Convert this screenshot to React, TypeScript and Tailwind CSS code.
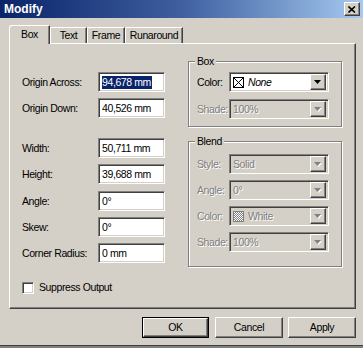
import React from "react";

const raised =
  "border-t border-l border-t-white border-l-white border-r border-b border-r-[#404040] border-b-[#404040] shadow-[inset_-1px_-1px_0_#808080]";
const sunken =
  "border-t border-l border-t-[#808080] border-l-[#808080] border-r border-b border-r-white border-b-white shadow-[inset_1px_1px_0_#404040,inset_-1px_-1px_0_#d4d0c8]";

function Field({ label, value, selected, mt }: { label: string; value: string; selected?: boolean; mt: string }) {
  return (
    <div className={`flex items-center h-[20px] ${mt}`}>
      <div className="w-[76px] text-black">{label}</div>
      <div className={`w-[67px] h-[20px] bg-white flex items-center pl-[3px] ${sunken}`}>
        <span className={selected ? "bg-[#0a246a] text-white pr-[1px] leading-[13px]" : "text-black"}>{value}</span>
      </div>
    </div>
  );
}

function Arrow({ disabled }: { disabled?: boolean }) {
  return (
    <div className={`w-[16px] h-[16px] bg-[#d4d0c8] flex items-center justify-center ${raised}`}>
      <svg width="8" height="5" viewBox="0 0 8 5">
        {disabled && <polygon points="1,1 8,1 4.5,5" fill="#ffffff" />}
        <polygon points="0,0 7,0 3.5,4" fill={disabled ? "#808080" : "#000000"} />
      </svg>
    </div>
  );
}

function Combo({
  label,
  disabled,
  children,
  mt,
}: {
  label: string;
  disabled?: boolean;
  children: React.ReactNode;
  mt: string;
}) {
  return (
    <div className={`flex items-center h-[20px] ${mt}`}>
      <div
        className={`w-[32px] whitespace-nowrap ${disabled ? "text-[#808080] [text-shadow:1px_1px_0_#fff]" : "text-black"}`}
      >
        {label}
      </div>
      <div
        className={`w-[100px] h-[20px] flex items-center justify-between pr-[2px] ${
          disabled ? "bg-[#d4d0c8]" : "bg-white"
        } ${sunken}`}
      >
        <div
          className={`flex items-center gap-[4px] pl-[3px] ${
            disabled ? "text-[#808080] [text-shadow:1px_1px_0_#fff]" : "text-black"
          }`}
        >
          {children}
        </div>
        <Arrow disabled={disabled} />
      </div>
    </div>
  );
}

function Group({ title, h, mt, children }: { title: string; h: string; mt: string; children: React.ReactNode }) {
  return (
    <div
      className={`relative w-[154px] ${h} ${mt} border border-[#808080] shadow-[inset_1px_1px_0_#fff,1px_1px_0_#fff] pl-[8px]`}
    >
      <div className="absolute left-[6px] top-[-8px] bg-[#d4d0c8] px-[2px] text-black leading-[14px]">{title}</div>
      {children}
    </div>
  );
}

function Tab({ label, active, w }: { label: string; active?: boolean; w: string }) {
  return (
    <div
      className={`${w} ${
        active ? "h-[19px] bg-[#d4d0c8] rounded-tl-[3px] pb-[2px]" : "h-[16px] mb-[1px] rounded-tl-[2px]"
      } border-l border-t border-l-white border-t-white border-r border-r-[#404040] shadow-[inset_-1px_0_0_#808080] flex items-center justify-center text-black`}
    >
      {label}
    </div>
  );
}

function Button({ label, def, w }: { label: string; def?: boolean; w: string }) {
  const inner = (
    <div className={`w-full h-full flex items-center justify-center ${raised}`}>{label}</div>
  );
  return def ? (
    <div className={`${w} h-[21px] border border-black`}>{inner}</div>
  ) : (
    <div className={`${w} h-[21px]`}>{inner}</div>
  );
}

export default function App() {
  return (
    <div
      className="w-[363px] h-[348px] bg-[#d4d0c8] flex flex-col text-[10.5px] tracking-[-0.4px] leading-none overflow-hidden"
      style={{ fontFamily: '"Liberation Sans", Arial, sans-serif' }}
    >
      {/* Title bar */}
      <div className="h-[18px] shrink-0 flex items-center justify-between bg-gradient-to-r from-[#0a246a] via-[#3f5f9f] to-[#a6caf0] pl-[4px] pr-[3px]">
        <span className="text-white font-bold text-[12px] tracking-[0px]">Modify</span>
        <div className={`w-[16px] h-[14px] bg-[#d4d0c8] flex items-center justify-center ${raised}`}>
          <svg width="8" height="7" viewBox="0 0 8 7">
            <path d="M0.5 0.5 L7 6.5 M7 0.5 L0.5 6.5" stroke="#000" strokeWidth="1.6" />
          </svg>
        </div>
      </div>

      {/* Tabs */}
      <div className="h-[7px] shrink-0" />
      <div className="h-[19px] shrink-0 flex items-end pl-[9px] relative z-10 mb-[-1px]">
        <Tab label="Box" active w="w-[41px]" />
        <Tab label="Text" w="w-[37px]" />
        <Tab label="Frame" w="w-[38px]" />
        <Tab label="Runaround" w="w-[58px]" />
      </div>

      {/* Panel */}
      <div className="ml-[9px] w-[347px] h-[266px] shrink-0 border-l border-t border-l-white border-t-white border-r border-b border-r-[#404040] border-b-[#404040] shadow-[inset_-1px_-1px_0_#808080] flex">
        <div className="pl-[12px] pt-[28px] w-[178px] flex flex-col">
          <Field label="Origin Across:" value="94,678 mm" selected mt="" />
          <Field label="Origin Down:" value="40,526 mm" mt="mt-[6px]" />
          <Field label="Width:" value="50,711 mm" mt="mt-[20px]" />
          <Field label="Height:" value="39,688 mm" mt="mt-[6px]" />
          <Field label="Angle:" value="0°" mt="mt-[7px]" />
          <Field label="Skew:" value="0°" mt="mt-[6px]" />
          <Field label="Corner Radius:" value="0 mm" mt="mt-[6px]" />
          <div className="flex items-center mt-[18px] h-[13px]">
            <div className={`w-[12px] h-[12px] bg-white ${sunken}`} />
            <span className="ml-[5px] text-black">Suppress Output</span>
          </div>
        </div>
        <div className="pt-[17px] flex flex-col">
          <Group title="Box" h="h-[66px]" mt="">
            <Combo label="Color:" mt="mt-[10px]">
              <svg width="11" height="11" viewBox="0 0 11 11">
                <rect x="0.5" y="0.5" width="10" height="10" fill="#fff" stroke="#000" />
                <path d="M1 1 L10 10 M10 1 L1 10" stroke="#000" strokeWidth="1" />
              </svg>
              <span className="italic">None</span>
            </Combo>
            <Combo label="Shade:" disabled mt="mt-[7px]">
              <span>100%</span>
            </Combo>
          </Group>
          <Group title="Blend" h="h-[126px]" mt="mt-[14px]">
            <Combo label="Style:" disabled mt="mt-[12px]">
              <span>Solid</span>
            </Combo>
            <Combo label="Angle:" disabled mt="mt-[6px]">
              <span>0°</span>
            </Combo>
            <Combo label="Color:" disabled mt="mt-[6px]">
              <svg width="11" height="11" viewBox="0 0 11 11">
                <rect x="0" y="0" width="11" height="11" fill="#808080" />
                <path
                  d="M1 1h1v1H1zM3 1h1v1H3zM5 1h1v1H5zM7 1h1v1H7zM9 1h1v1H9zM2 2h1v1H2zM4 2h1v1H4zM6 2h1v1H6zM8 2h1v1H8zM1 3h1v1H1zM3 3h1v1H3zM5 3h1v1H5zM7 3h1v1H7zM9 3h1v1H9zM2 4h1v1H2zM4 4h1v1H4zM6 4h1v1H6zM8 4h1v1H8zM1 5h1v1H1zM3 5h1v1H3zM5 5h1v1H5zM7 5h1v1H7zM9 5h1v1H9zM2 6h1v1H2zM4 6h1v1H4zM6 6h1v1H6zM8 6h1v1H8zM1 7h1v1H1zM3 7h1v1H3zM5 7h1v1H5zM7 7h1v1H7zM9 7h1v1H9zM2 8h1v1H2zM4 8h1v1H4zM6 8h1v1H6zM8 8h1v1H8zM1 9h1v1H1zM3 9h1v1H3zM5 9h1v1H5zM7 9h1v1H7zM9 9h1v1H9z"
                  fill="#ffffff"
                />
              </svg>
              <span>White</span>
            </Combo>
            <Combo label="Shade:" disabled mt="mt-[6px]">
              <span>100%</span>
            </Combo>
          </Group>
        </div>
      </div>

      {/* Buttons */}
      <div className="mt-[8px] h-[21px] shrink-0 flex pl-[142px]">
        <Button label="OK" def w="w-[67px]" />
        <div className="w-[6px]" />
        <Button label="Cancel" w="w-[68px]" />
        <div className="w-[5px]" />
        <Button label="Apply" w="w-[68px]" />
      </div>
      <div className="flex-1" />
      <div className="h-[3px] shrink-0 border-t border-[#404040] bg-[#808080]" />
    </div>
  );
}
